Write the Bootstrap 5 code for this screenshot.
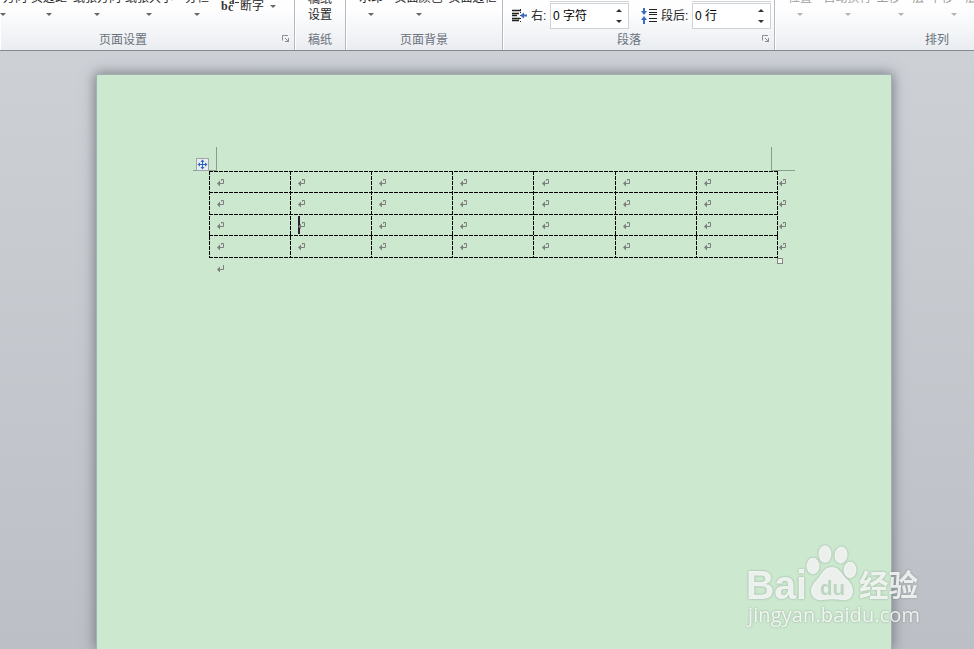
<!DOCTYPE html>
<html lang="zh-CN">
<head>
<meta charset="utf-8">
<meta name="viewport" content="width=device-width, initial-scale=1">
<title>文档</title>
<link href="https://cdn.jsdelivr.net/npm/bootstrap@5.3.0/dist/css/bootstrap.min.css" rel="stylesheet">
<style>
body{width:974px;height:649px;font:12px/16px "Liberation Sans","Noto Sans CJK SC",sans-serif;color:#262626;background:linear-gradient(#cdd1d6 51px,#bcbfc5)}
.ribbon{height:51px;background:linear-gradient(#fff,#fdfdfe 12px,#f0f2f5 38px,#e9ecf0);border-bottom:1px solid #858a92}
.group{border-right:1px solid #b3bac3;box-shadow:inset 1px 0 #fff,1px 0 #fff;height:50px;flex:none;display:flex;flex-direction:column}
.group-title{color:#69717c;height:18px;margin-top:1px}
.tools{height:31px;flex:none}
.tool{flex:none;margin-top:-10px;display:flex;flex-direction:column;align-items:center;gap:7px}
.tri{width:0;height:0;border:3px solid transparent;border-top:3px solid #666;border-bottom:0}
.tri-up{width:0;height:0;border:3px solid transparent;border-bottom:3px solid #333;border-top:0}
.spin .tri{border-top-color:#333}
.off .tool{color:#a0a0a0}.off .tri{border-top-color:#b3b3b3}
.launcher{right:4px;bottom:7px}
.spin{width:79px;height:26px;margin-top:3px;border:1px solid #cfd3d8;color:#000;padding-left:2px}
.spin::before{content:"";position:absolute;left:-1px;right:-1px;top:-3px;height:1px;background:#cfd3d8}
.spin>span:first-child{margin-top:-1px}
.arrows{padding:5px 6px 5px 0}
.w44{width:44px}.w48{width:48px}.w50{width:50px}.w52{width:52px}
.sheet{width:796px;height:575px;margin:23px 0 0 96px;padding:96px 0 0 112px;background:#cce8cf;border:1px solid #a5b0b5;border-bottom:0;box-shadow:0 0 12px 1px #777b82}
.doc-table{width:584px;table-layout:fixed;border-collapse:collapse}
.doc-table td{padding:8px 0 0 8px;line-height:0;vertical-align:top}
.doc-table tr{height:21px}.doc-table tr:nth-child(even){height:22px}
.doc-table td:nth-child(5){padding-left:9px}
.doc-table td:last-child{padding-left:2px}
.para{display:block;margin:8px 0 0 8px}
.rules{left:96px;top:72px}
.caret{left:201px;top:141px;width:2px;height:18px;background:#2d1a33}
.wm{left:740px;top:540px;filter:drop-shadow(0 0 1px rgba(80,100,85,.55))}
</style>
<script src="https://cdn.jsdelivr.net/npm/bootstrap@5.3.0/dist/js/bootstrap.bundle.min.js"></script>
</head>
<body class="overflow-hidden position-relative">
<svg width="0" height="0" class="position-absolute"><defs>
<g id="launch" fill="none" stroke="#8b9096"><path d="M.5 5.500V.5H6M3 3l2 2"/><path d="M7 3v4H3v-1h2V5h1V3z" fill="#8b9096" stroke="none"/></g>
<g id="cellmark" fill="none" stroke="#7f7f7f"><path d="M4 .5h2.500v4H2"/><path d="M4.500 0v2" stroke-opacity=".6"/><path d="M3 1.500v6L0 4.500z" fill="#7f7f7f" stroke="none"/></g>
</defs></svg>
<header class="ribbon d-flex overflow-hidden text-nowrap">
 <section class="group position-relative text-center" style="width:295px">
  <div class="tools d-flex align-items-start" style="margin-left:-21px">
   <div class="tool w48">文字方向<i class="tri"></i></div>
   <div class="tool w44">页边距<i class="tri"></i></div>
   <div class="tool w52">纸张方向<i class="tri"></i></div>
   <div class="tool w52">纸张大小<i class="tri"></i></div>
   <div class="tool w44">分栏<i class="tri"></i></div>
   <div class="d-flex" style="margin:-2px 0 0 2px">
    <svg style="margin-top:2px" width="19" height="13"><g font-family="Liberation Serif" font-weight="bold" font-size="12" fill="#333"><text x="0" y="10">b</text><text x="7" y="11">c</text><text x="8" y="3.500" font-size="11">a</text></g><path d="M14 2.500h4" stroke="#333"/></svg>
    <span>断字</span><i class="tri" style="margin:7px 0 0 6px"></i>
   </div>
  </div>
  <div class="group-title" style="margin-right:48px">页面设置</div>
  <svg class="launcher position-absolute" width="8" height="8"><use href="#launch"/></svg>
 </section>
 <section class="group text-center" style="width:51px">
  <div class="tools"><div class="tool gap-0" style="margin-top:-9px"><span>稿纸</span><span>设置</span></div></div>
  <div class="group-title">稿纸</div>
 </section>
 <section class="group text-center" style="width:157px">
  <div class="tools d-flex align-items-start">
   <div class="tool w50">水印<i class="tri"></i></div>
   <div class="tool" style="width:45px">页面颜色<i class="tri"></i></div>
   <div class="tool" style="width:63px">页面边框</div>
  </div>
  <div class="group-title">页面背景</div>
 </section>
 <section class="group position-relative text-center" style="width:272px">
  <div class="tools d-flex align-items-start">
   <svg style="margin:8px 0 0 8px" width="16" height="16"><path d="M1 2.500h9M1 5.500h7M1 7.500h5M1 10.500h8M1 12.500h7" stroke="#222" fill="none" stroke-width="1.300"/><path d="M9.500 1v14" stroke="#222" stroke-dasharray="1 2"/><path d="M9 7.500l4-3v2H16v2h-3v2z" fill="#3c6bc0"/></svg>
   <span style="margin:8px 0 0 4px;width:19px" class="text-start">右:</span>
   <div class="spin position-relative bg-white d-flex justify-content-between align-items-center"><span>0 字符</span><span class="arrows h-100 d-flex flex-column justify-content-between"><i class="tri-up"></i><i class="tri"></i></span></div>
   <svg style="margin:7px 0 0 12px" width="18" height="17"><path d="M8 2.500h8M8 5.500h8M8 7.500h8M8 11.500h8M8 14.500h8" stroke="#222"/><path d="M3 1v4M3 12v5" stroke="#3c6bc0" stroke-width="2"/><path d="M0 4h6L3 8zM0 13h6L3 9z" fill="#3c6bc0"/></svg>
   <span style="margin:8px 0 0 2px;width:31px" class="text-start">段后:</span>
   <div class="spin position-relative bg-white d-flex justify-content-between align-items-center"><span>0 行</span><span class="arrows h-100 d-flex flex-column justify-content-between"><i class="tri-up"></i><i class="tri"></i></span></div>
  </div>
  <div class="group-title" style="margin-right:19px">段落</div>
  <svg class="launcher position-absolute" width="8" height="8"><use href="#launch"/></svg>
 </section>
 <section class="group off border-0" style="width:324px">
  <div class="tools d-flex align-items-start">
   <div class="tool w50">位置<i class="tri"></i></div>
   <div class="tool" style="width:45px">自动换行<i class="tri"></i></div>
   <div class="tool" style="width:61px">上移一层<i class="tri"></i></div>
   <div class="tool" style="width:45px">下移一层<i class="tri"></i></div>
   <div class="tool" style="width:62px">选择窗格</div>
  </div>
  <div class="group-title text-center">排列</div>
 </section>
</header>
<main class="sheet position-relative">
 <svg class="rules position-absolute" width="604" height="120" fill="none">
  <path d="M0 23.500h23.500V0M602 23.500h-23.500V0" stroke="#8b9d8d"/>
  <g stroke="#000" stroke-dasharray="4 1"><path d="M16 24.500h569M16 45.500h569M16 67.500h569M16 88.500h569M16 110.500h569"/><path d="M16.500 24v87M97.500 24v87M178.500 24v87M259.500 24v87M340.500 24v87M422.500 24v87M503.500 24v87M584.500 24v87"/></g>
  <rect x="3.500" y="11.500" width="12" height="12" fill="#e8eef0" stroke="#a4a4a8"/>
  <path d="M5 17.500h9M9.500 13v9" stroke="#2f62c4"/><path d="M4.500 17.500l2.500-2v4zM14.500 17.500l-2.500-2v4zM9.500 12.500l-2 2.500h4zM9.500 22.500l-2-2.500h4z" fill="#2f62c4"/>
  <rect x="584.500" y="111.500" width="5" height="5" fill="#e9f3ea" stroke="#858585"/>
 </svg>
 <div class="caret position-absolute"></div>
 <table class="doc-table position-relative"><colgroup><col style="width:81px"><col style="width:81px"><col style="width:81px"><col style="width:81px"><col style="width:82px"><col style="width:81px"><col style="width:81px"><col style="width:16px"></colgroup><tbody id="rows"></tbody></table>
 <svg class="para position-relative" width="7" height="8"><path d="M6.500 0v4.500H2" fill="none" stroke="#7f7f7f"/><path d="M3 1.500v6L0 4.500z" fill="#7f7f7f"/></svg>
</main>
<svg class="wm position-absolute" width="190" height="95" fill="#fff" fill-opacity=".82">
 <text x="6" y="59" font-family="Liberation Sans" font-weight="bold" font-size="40" textLength="61" lengthAdjust="spacingAndGlyphs">Bai</text>
 <ellipse cx="73" cy="26" rx="6.500" ry="8.300"/><ellipse cx="85" cy="14" rx="6.500" ry="8.700"/><ellipse cx="101" cy="15" rx="6.500" ry="8.500" transform="rotate(10 101 15)"/><ellipse cx="110" cy="30" rx="6.500" ry="8.300"/>
 <path d="M92 27c6 0 9 5 13 10 5 5 8 8 8 14 0 7-5 10-11 9-7-1-13-1-19 0-7 1-12-3-12-9s4-9 8-14c4-6 7-10 13-10z"/>
 <text x="80" y="55" font-family="Liberation Sans" font-weight="bold" font-size="20" fill="#bcd6c0" fill-opacity="1" textLength="25" lengthAdjust="spacingAndGlyphs">du</text>
 <text x="119" y="56" font-family="Noto Sans CJK SC" font-weight="bold" font-size="29.500">经验</text>
 <text x="8" y="82" font-family="Open Sans" font-size="20" textLength="172" lengthAdjust="spacing">jingyan.baidu.com</text>
</svg>
<script>
const mark='<td><svg width="7" height="8"><use href="#cellmark"/></svg></td>';
document.getElementById('rows').innerHTML=('<tr>'+mark.repeat(8)+'</tr>').repeat(4);
</script>
</body>
</html>
